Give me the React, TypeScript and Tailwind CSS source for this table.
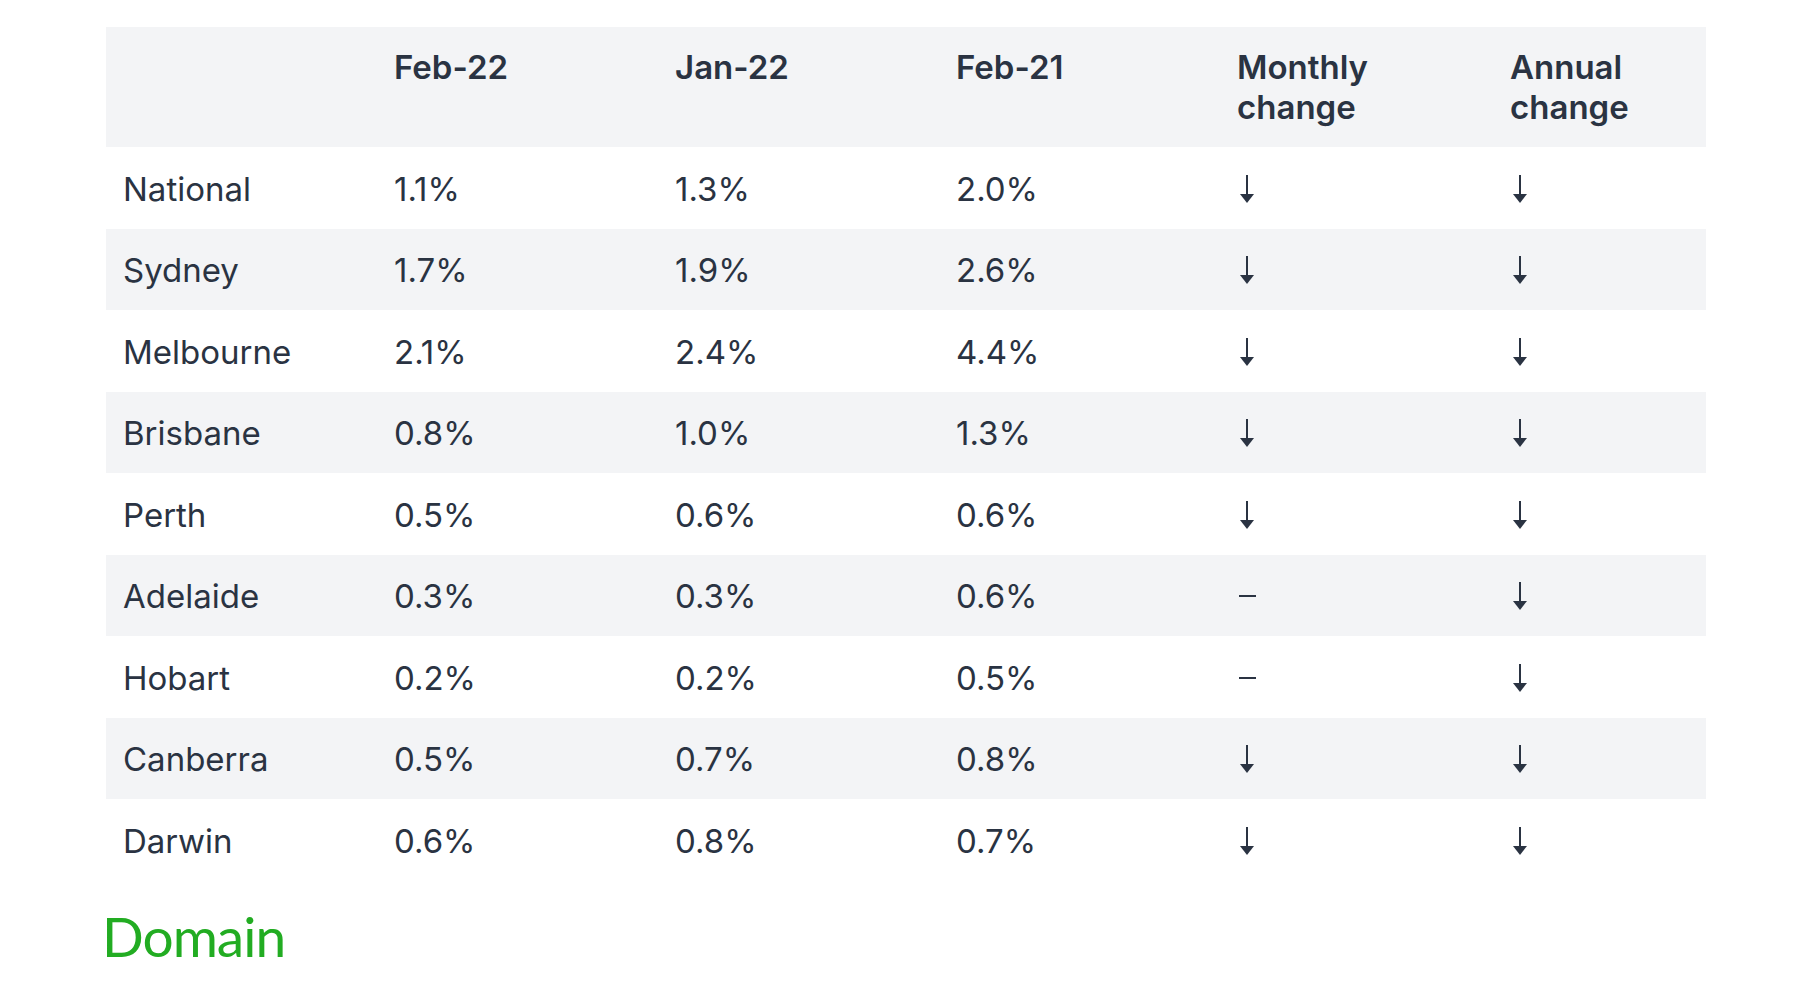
import React from 'react';

type Row = {
  city: string;
  feb22: string;
  jan22: string;
  feb21: string;
  monthly: 'down' | 'flat';
  annual: 'down' | 'flat';
};

const rows: Row[] = [
  { city: 'National', feb22: '1.1%', jan22: '1.3%', feb21: '2.0%', monthly: 'down', annual: 'down' },
  { city: 'Sydney', feb22: '1.7%', jan22: '1.9%', feb21: '2.6%', monthly: 'down', annual: 'down' },
  { city: 'Melbourne', feb22: '2.1%', jan22: '2.4%', feb21: '4.4%', monthly: 'down', annual: 'down' },
  { city: 'Brisbane', feb22: '0.8%', jan22: '1.0%', feb21: '1.3%', monthly: 'down', annual: 'down' },
  { city: 'Perth', feb22: '0.5%', jan22: '0.6%', feb21: '0.6%', monthly: 'down', annual: 'down' },
  { city: 'Adelaide', feb22: '0.3%', jan22: '0.3%', feb21: '0.6%', monthly: 'flat', annual: 'down' },
  { city: 'Hobart', feb22: '0.2%', jan22: '0.2%', feb21: '0.5%', monthly: 'flat', annual: 'down' },
  { city: 'Canberra', feb22: '0.5%', jan22: '0.7%', feb21: '0.8%', monthly: 'down', annual: 'down' },
  { city: 'Darwin', feb22: '0.6%', jan22: '0.8%', feb21: '0.7%', monthly: 'down', annual: 'down' },
];

const gridCols = 'grid grid-cols-[288px_281px_281px_281px_273px_196px]';

function Trend({ value }: { value: 'down' | 'flat' }) {
  if (value === 'flat') {
    return <div className="ml-[2px] h-[2px] w-[17px] bg-[#2a3342]" />;
  }
  return (
    <svg width="16" height="28" viewBox="0 0 16 28" className="ml-[2px]">
      <rect x="7" y="0" width="2" height="20" fill="#2a3342" />
      <path d="M1 19 L15 19 L8 28 Z" fill="#2a3342" />
    </svg>
  );
}

export default function App() {
  return (
    <div className="min-h-screen bg-white pt-[27px] pl-[106px] text-[#2a3342] font-['Inter','Roboto',sans-serif]">
      <div className="w-[1600px]">
        {/* header */}
        <div className={`${gridCols} bg-[#f3f4f6] py-5 text-[33px] leading-[40px] font-semibold`}>
          <div className="pl-[17px]"></div>
          <div>Feb-22</div>
          <div>Jan-22</div>
          <div>Feb-21</div>
          <div>Monthly<br />change</div>
          <div>Annual<br />change</div>
        </div>

        {rows.map((r, i) => (
          <div
            key={r.city}
            className={`${gridCols} h-[81.5px] items-center text-[33px] leading-[40px] pt-[2px] ${
              i % 2 === 1 ? 'bg-[#f3f4f6]' : 'bg-white'
            }`}
          >
            <div className="pl-[17px]">{r.city}</div>
            <div>{r.feb22}</div>
            <div>{r.jan22}</div>
            <div>{r.feb21}</div>
            <div className="flex items-center"><Trend value={r.monthly} /></div>
            <div className="flex items-center"><Trend value={r.annual} /></div>
          </div>
        ))}
      </div>

      <div className="mt-[28px] -ml-[4px] text-[55px] leading-[55px] text-[#22ac22] font-['Lato',sans-serif] tracking-[-1px]">
        Domain
      </div>
    </div>
  );
}
